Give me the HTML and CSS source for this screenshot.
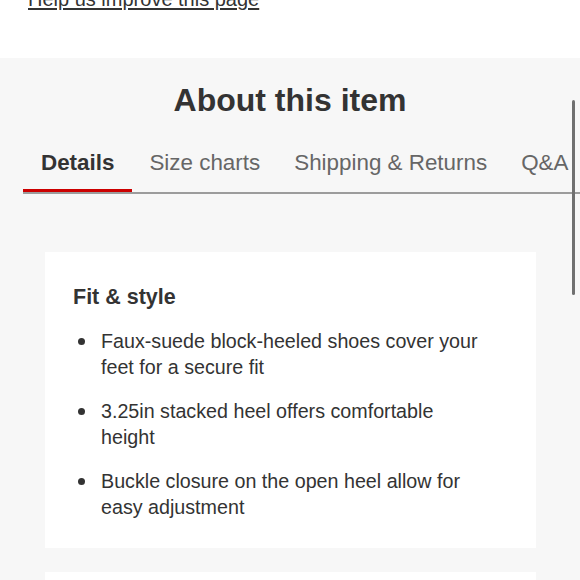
FILE: index.html
```html
<!DOCTYPE html>
<html lang="en">
<head>
<meta charset="utf-8">
<title>About this item</title>
<link rel="stylesheet" href="styles.css">
</head>
<body>
<div class="top">
  <a class="help-link" href="#">Help us improve this page</a>
</div>
<section class="about">
  <h2 class="about-title">About this item</h2>
  <div class="tabs">
    <div class="tab tab-active">Details</div>
    <div class="tab">Size charts</div>
    <div class="tab">Shipping &amp; Returns</div>
    <div class="tab">Q&amp;A</div>
  </div>
  <div class="card">
    <h3 class="card-title">Fit &amp; style</h3>
    <ul class="bullets">
      <li>Faux-suede block-heeled shoes cover your feet for a secure fit</li>
      <li>3.25in stacked heel offers comfortable height</li>
      <li>Buckle closure on the open heel allow for easy adjustment</li>
    </ul>
  </div>
  <div class="card card-next"></div>
  <div class="scrollbar"></div>
</section>
</body>
</html>
```
FILE: styles.css
```css
html, body {
  margin: 0;
  padding: 0;
  height: 580px;
  overflow: hidden;
  background: #f7f7f7;
  font-family: "Liberation Sans", Arial, sans-serif;
  color: #333;
}

.top {
  display: flow-root;
  background: #fff;
  height: 58px;
  padding-left: 28px;
}

.help-link {
  display: block;
  margin-top: -14px;
  font-size: 20px;
  line-height: 26px;
  color: #333;
  text-decoration: underline;
  text-underline-offset: 2px;
}

.about {
  position: relative;
  background: #f7f7f7;
}

.about-title {
  margin: 0;
  padding-top: 22px;
  font-size: 32px;
  line-height: 40px;
  font-weight: bold;
  text-align: center;
  color: #333;
}

.tabs {
  display: flex;
  margin: 30px 0 0 23px;
  border-bottom: 2px solid #9c9c9c;
  white-space: nowrap;
  overflow: hidden;
}

.tab {
  flex: none;
  padding: 0 17px 13px;
  margin-bottom: -1px;
  font-size: 22.4px;
  line-height: 26px;
  color: #666;
  border-bottom: 4px solid transparent;
}

.tab-active {
  padding: 0 18px 13px;
  font-weight: bold;
  color: #333;
  border-bottom-color: #cc0000;
}

.card {
  background: #fff;
  margin: 58px 44px 0 45px;
  padding: 32px 52px 28px 28px;
}

.card-next {
  margin-top: 24px;
  height: 60px;
  padding: 0;
}

.card-title {
  margin: 0;
  font-size: 21.5px;
  line-height: 26px;
  font-weight: bold;
  color: #333;
}

.bullets {
  list-style: none;
  margin: 18px 0 0;
  padding: 0 0 0 28px;
}

.bullets li {
  position: relative;
  font-size: 19.7px;
  line-height: 26px;
  color: #333;
}

.bullets li + li {
  margin-top: 18px;
}

.bullets li::before {
  content: "";
  position: absolute;
  left: -23px;
  top: 10px;
  width: 7px;
  height: 7px;
  border-radius: 50%;
  background: #333;
}

.scrollbar {
  position: absolute;
  left: 572px;
  top: 42px;
  width: 3px;
  height: 195px;
  border-radius: 2px;
  background: #707070;
}
```
